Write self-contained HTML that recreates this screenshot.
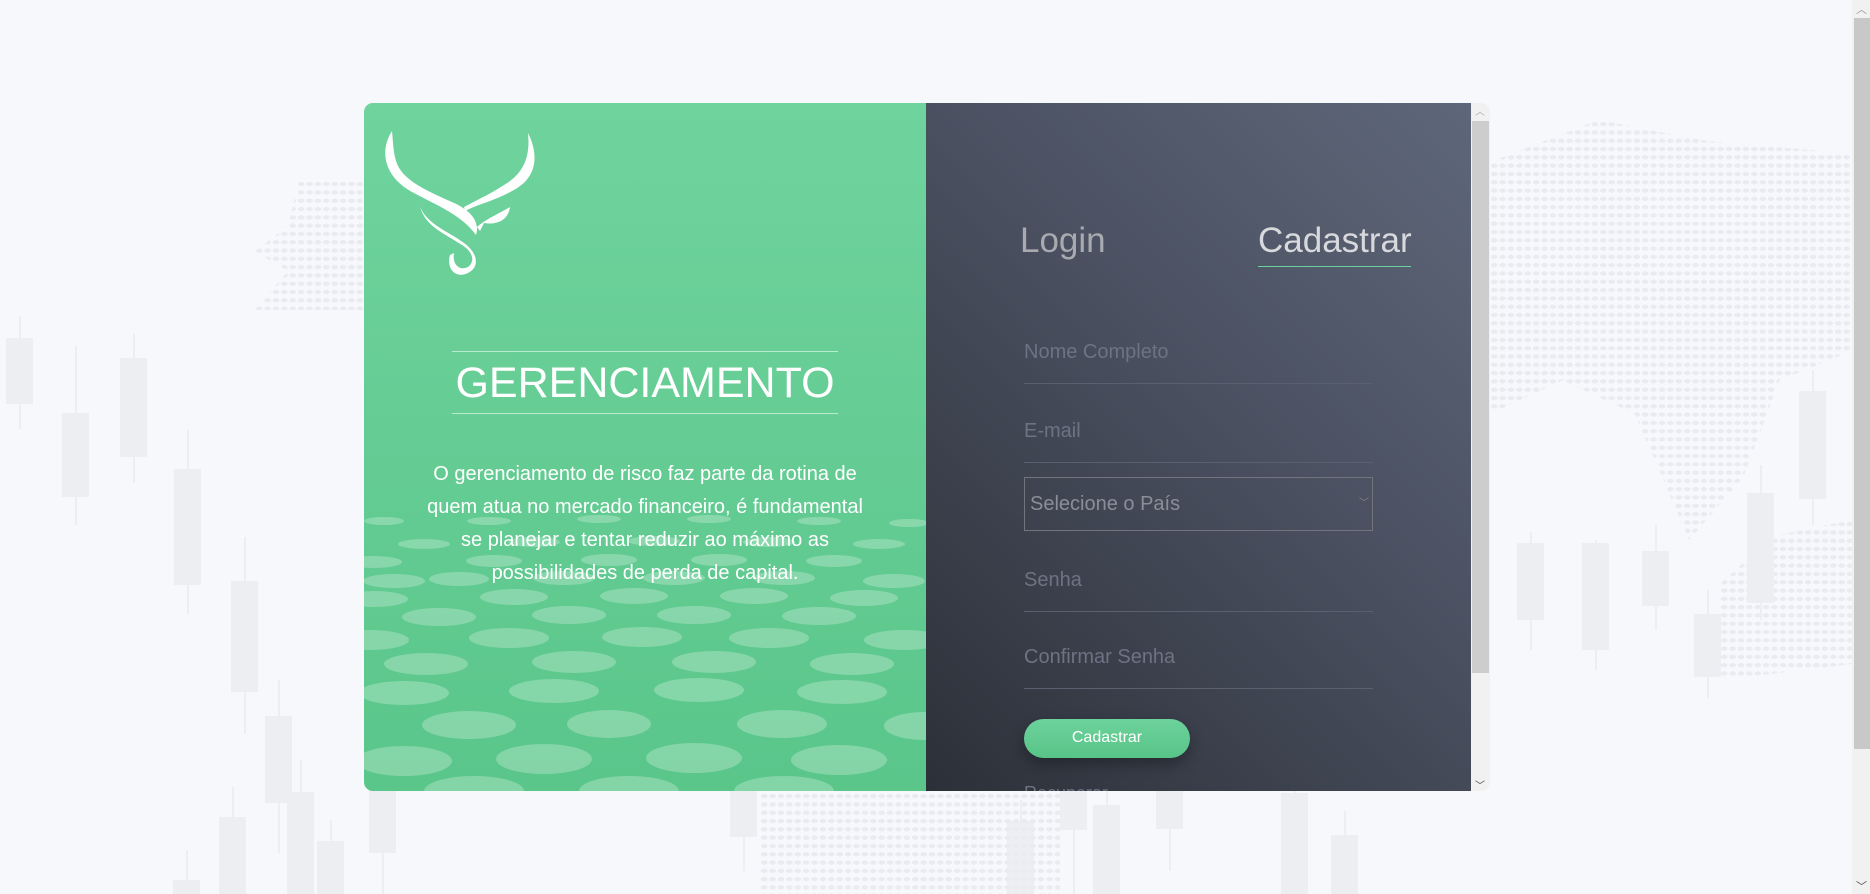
<!DOCTYPE html>
<html><head><meta charset="utf-8"><style>
*{margin:0;padding:0;box-sizing:border-box}
html,body{width:1870px;height:894px;overflow:hidden;background:#f7f8fc;font-family:"Liberation Sans",Arial,sans-serif}
.c{position:absolute;background:#eceef2}
.w{position:absolute;width:2px;background:#eceef2}
.dots{position:absolute;background-image:radial-gradient(ellipse 3.4px 2.2px at 50% 50%,#e9ebf0 95%,transparent 100%);background-size:8.4px 8.3px}
#card{position:absolute;left:364px;top:103px;width:1126px;height:688px;border-radius:9px;overflow:hidden}
#green{position:absolute;left:0;top:0;width:562px;height:688px;background:linear-gradient(#6fd39d,#5ac68a)}
#dark{position:absolute;left:562px;top:0;width:545px;height:688px;background:linear-gradient(225deg,#5e677a 0%,#4a5060 45%,#2c3038 100%)}
#sb{position:absolute;left:1107px;top:0;width:19px;height:688px;background:#f1f1f1}
h1{position:absolute;left:88px;top:248px;width:386px;height:63px;border-top:1px solid #b8ecd0;border-bottom:1px solid #b8ecd0;color:#fff;font-weight:normal;font-size:43px;text-align:center;line-height:63px}
p.t{position:absolute;left:0;width:562px;top:355px;text-align:center;color:#fff;font-size:20px;line-height:33px}
.tab{position:absolute;top:118px;font-size:35px;line-height:40px}
.ph{position:absolute;left:98px;width:349px;color:#6d7383;font-size:20px;border-bottom:1px solid #5a6070;height:47px;line-height:30px}
</style></head><body>
<div class="w" style="left:19px;top:316px;height:113px"></div><div class="c" style="left:6px;top:338px;width:27px;height:66px"></div>
<div class="w" style="left:75px;top:346px;height:179px"></div><div class="c" style="left:62px;top:413px;width:27px;height:84px"></div>
<div class="w" style="left:133px;top:334px;height:149px"></div><div class="c" style="left:120px;top:358px;width:27px;height:99px"></div>
<div class="w" style="left:187px;top:430px;height:184px"></div><div class="c" style="left:174px;top:469px;width:27px;height:116px"></div>
<div class="w" style="left:244px;top:537px;height:197px"></div><div class="c" style="left:231px;top:581px;width:27px;height:111px"></div>
<div class="w" style="left:278px;top:680px;height:173px"></div><div class="c" style="left:265px;top:716px;width:27px;height:87px"></div>
<div class="w" style="left:300px;top:760px;height:134px"></div><div class="c" style="left:287px;top:792px;width:27px;height:102px"></div>
<div class="w" style="left:232px;top:787px;height:107px"></div><div class="c" style="left:219px;top:817px;width:27px;height:77px"></div>
<div class="w" style="left:330px;top:820px;height:74px"></div><div class="c" style="left:317px;top:841px;width:27px;height:53px"></div>
<div class="w" style="left:382px;top:763px;height:131px"></div><div class="c" style="left:369px;top:787px;width:27px;height:66px"></div>
<div class="w" style="left:186px;top:850px;height:44px"></div><div class="c" style="left:173px;top:880px;width:27px;height:14px"></div>
<div class="w" style="left:743px;top:763px;height:108px"></div><div class="c" style="left:730px;top:787px;width:27px;height:50px"></div>
<div class="w" style="left:1020px;top:800px;height:94px"></div><div class="c" style="left:1007px;top:821px;width:27px;height:73px"></div>
<div class="w" style="left:1073px;top:752px;height:142px"></div><div class="c" style="left:1060px;top:776px;width:27px;height:54px"></div>
<div class="w" style="left:1106px;top:775px;height:119px"></div><div class="c" style="left:1093px;top:805px;width:27px;height:89px"></div>
<div class="w" style="left:1169px;top:763px;height:108px"></div><div class="c" style="left:1156px;top:787px;width:27px;height:42px"></div>
<div class="w" style="left:1294px;top:763px;height:131px"></div><div class="c" style="left:1281px;top:793px;width:27px;height:101px"></div>
<div class="w" style="left:1344px;top:811px;height:83px"></div><div class="c" style="left:1331px;top:835px;width:27px;height:59px"></div>
<div class="dots" style="left:1490px;top:120px;width:362px;height:420px;clip-path:polygon(0 10%,30% 0,60% 5%,100% 8%,100% 55%,80% 62%,70% 85%,55% 100%,40% 70%,20% 62%,0 70%)"></div>
<div class="dots" style="left:1720px;top:520px;width:132px;height:160px;clip-path:polygon(40% 10%,100% 0,100% 90%,0 100%,0 40%)"></div>
<div class="dots" style="left:255px;top:180px;width:110px;height:130px;clip-path:polygon(40% 0,100% 0,100% 100%,0 100%,30% 70%,0 55%,30% 35%)"></div>
<div class="dots" style="left:760px;top:792px;width:300px;height:102px"></div>
<div class="w" style="left:1530px;top:532px;height:118px"></div><div class="c" style="left:1517px;top:543px;width:27px;height:77px"></div>
<div class="w" style="left:1595px;top:540px;height:130px"></div><div class="c" style="left:1582px;top:543px;width:27px;height:107px"></div>
<div class="w" style="left:1655px;top:525px;height:105px"></div><div class="c" style="left:1642px;top:551px;width:27px;height:55px"></div>
<div class="w" style="left:1707px;top:590px;height:108px"></div><div class="c" style="left:1694px;top:614px;width:27px;height:63px"></div>
<div class="w" style="left:1760px;top:465px;height:155px"></div><div class="c" style="left:1747px;top:493px;width:27px;height:110px"></div>
<div class="w" style="left:1812px;top:370px;height:155px"></div><div class="c" style="left:1799px;top:391px;width:27px;height:108px"></div>
<div style="position:absolute;left:1852px;top:0;width:18px;height:894px;background:#f1f1f1"></div>
<div style="position:absolute;left:1854px;top:18px;width:16px;height:731px;background:#c8c8c8"></div>
<div style="position:absolute;left:1856px;top:1px;color:#999;font-size:11px">︿</div>
<div style="position:absolute;left:1856px;top:878px;color:#555;font-size:11px">﹀</div>

<div id="card">
 <div id="green">
  <svg width="562" height="688" style="position:absolute;left:0;top:0" fill="#fff" fill-opacity=".25">
   <g>
    <ellipse cx="20" cy="418" rx="20" ry="4"/><ellipse cx="125" cy="418" rx="22" ry="4"/><ellipse cx="235" cy="416" rx="22" ry="4"/><ellipse cx="345" cy="416" rx="22" ry="4"/><ellipse cx="455" cy="418" rx="22" ry="4"/><ellipse cx="545" cy="420" rx="20" ry="4"/>
    <ellipse cx="60" cy="441" rx="26" ry="5"/><ellipse cx="170" cy="439" rx="26" ry="5"/><ellipse cx="290" cy="438" rx="26" ry="5"/><ellipse cx="405" cy="439" rx="26" ry="5"/><ellipse cx="515" cy="441" rx="26" ry="5"/>
    <ellipse cx="10" cy="459" rx="28" ry="6"/><ellipse cx="130" cy="458" rx="28" ry="6"/><ellipse cx="245" cy="457" rx="28" ry="6"/><ellipse cx="355" cy="457" rx="28" ry="6"/><ellipse cx="470" cy="458" rx="28" ry="6"/>
    <ellipse cx="30" cy="478" rx="31" ry="7"/><ellipse cx="95" cy="476" rx="30" ry="7"/><ellipse cx="200" cy="475" rx="31" ry="7"/><ellipse cx="310" cy="475" rx="31" ry="7"/><ellipse cx="420" cy="475" rx="31" ry="7"/><ellipse cx="530" cy="478" rx="31" ry="7"/>
    <ellipse cx="10" cy="496" rx="34" ry="8"/><ellipse cx="150" cy="494" rx="34" ry="8"/><ellipse cx="270" cy="493" rx="34" ry="8"/><ellipse cx="390" cy="493" rx="34" ry="8"/><ellipse cx="500" cy="495" rx="34" ry="8"/>
    <ellipse cx="75" cy="514" rx="37" ry="9"/><ellipse cx="205" cy="512" rx="37" ry="9"/><ellipse cx="330" cy="512" rx="37" ry="9"/><ellipse cx="455" cy="513" rx="37" ry="9"/>
    <ellipse cx="5" cy="537" rx="40" ry="10"/><ellipse cx="145" cy="535" rx="40" ry="10"/><ellipse cx="278" cy="534" rx="40" ry="10"/><ellipse cx="405" cy="535" rx="40" ry="10"/><ellipse cx="540" cy="537" rx="40" ry="10"/>
    <ellipse cx="62" cy="561" rx="42" ry="11"/><ellipse cx="210" cy="559" rx="42" ry="11"/><ellipse cx="350" cy="559" rx="42" ry="11"/><ellipse cx="488" cy="561" rx="42" ry="11"/>
    <ellipse cx="40" cy="590" rx="45" ry="12"/><ellipse cx="190" cy="588" rx="45" ry="12"/><ellipse cx="335" cy="587" rx="45" ry="12"/><ellipse cx="478" cy="589" rx="45" ry="12"/>
    <ellipse cx="105" cy="622" rx="47" ry="14"/><ellipse cx="245" cy="621" rx="42" ry="14"/><ellipse cx="418" cy="621" rx="45" ry="14"/><ellipse cx="560" cy="623" rx="40" ry="14"/>
    <ellipse cx="40" cy="658" rx="48" ry="15"/><ellipse cx="180" cy="656" rx="48" ry="15"/><ellipse cx="330" cy="655" rx="48" ry="15"/><ellipse cx="475" cy="657" rx="48" ry="15"/>
    <ellipse cx="110" cy="688" rx="50" ry="15"/><ellipse cx="265" cy="688" rx="50" ry="15"/><ellipse cx="420" cy="688" rx="50" ry="15"/>
   </g>
  </svg>
  <svg width="160" height="150" viewBox="0 0 160 150" style="position:absolute;left:20px;top:28px" fill="#fff">
   <path d="M8 0 C-6 22 2 48 30 62 C52 74 78 84 92 104 C96 92 88 80 70 72 C44 60 18 50 12 30 C9 20 9 10 8 0Z"/>
   <path d="M144 2 C156 26 152 48 128 60 C110 70 92 74 81 80 L80 76 C95 68 112 60 126 50 C142 38 146 22 144 2Z"/>
   <path d="M36 76 C44 94 64 100 80 112 C94 122 96 136 84 142 C72 148 62 138 66 124 L70 122 C68 134 76 140 84 136 C92 130 88 120 78 114 C60 102 42 96 36 76Z"/>
   <path d="M93 96 C102 88 112 84 126 76 C124 90 112 94 100 92 L96 100Z"/>
  </svg>
  <h1>GERENCIAMENTO</h1>
  <p class="t">O gerenciamento de risco faz parte da rotina de<br>quem atua no mercado financeiro, é fundamental<br>se planejar e tentar reduzir ao máximo as<br>possibilidades de perda de capital.</p>
 </div>
 <div id="dark">
  <div class="tab" style="left:94px;color:#a8aab0">Login</div>
  <div class="tab" style="left:332px;color:#d8d9dc">Cadastrar</div>
  <div style="position:absolute;left:332px;top:163px;width:153px;height:1px;background:#6cd29c"></div>
  <div class="ph" style="top:234px">Nome Completo</div>
  <div class="ph" style="top:313px">E-mail</div>
  <div style="position:absolute;left:98px;top:374px;width:349px;height:54px;border:1px solid #72767c;color:#8a8e98;font-size:20px;line-height:52px;padding-left:5px">Selecione o País<span style="position:absolute;right:3px;top:0;font-size:10px;color:#888">﹀</span></div>
  <div class="ph" style="top:462px">Senha</div>
  <div class="ph" style="top:539px">Confirmar Senha</div>
  <div style="position:absolute;left:98px;top:616px;width:166px;height:39px;border-radius:20px;background:linear-gradient(#6dd29c,#58c487);color:#fff;font-size:16px;text-align:center;line-height:38px;box-shadow:0 6px 14px rgba(0,0,0,.3)">Cadastrar</div>
  <div style="position:absolute;left:98px;top:680px;color:#6d7383;font-size:18px">Recuperar</div>
 </div>
 <div id="sb"><div style="position:absolute;left:1px;top:18px;width:17px;height:552px;background:#cdcdcd"></div>
  <div style="position:absolute;left:4px;top:0;color:#aaa;font-size:10px">︿</div>
  <div style="position:absolute;left:4px;top:674px;color:#444;font-size:10px">﹀</div></div>
</div>
</body></html>
